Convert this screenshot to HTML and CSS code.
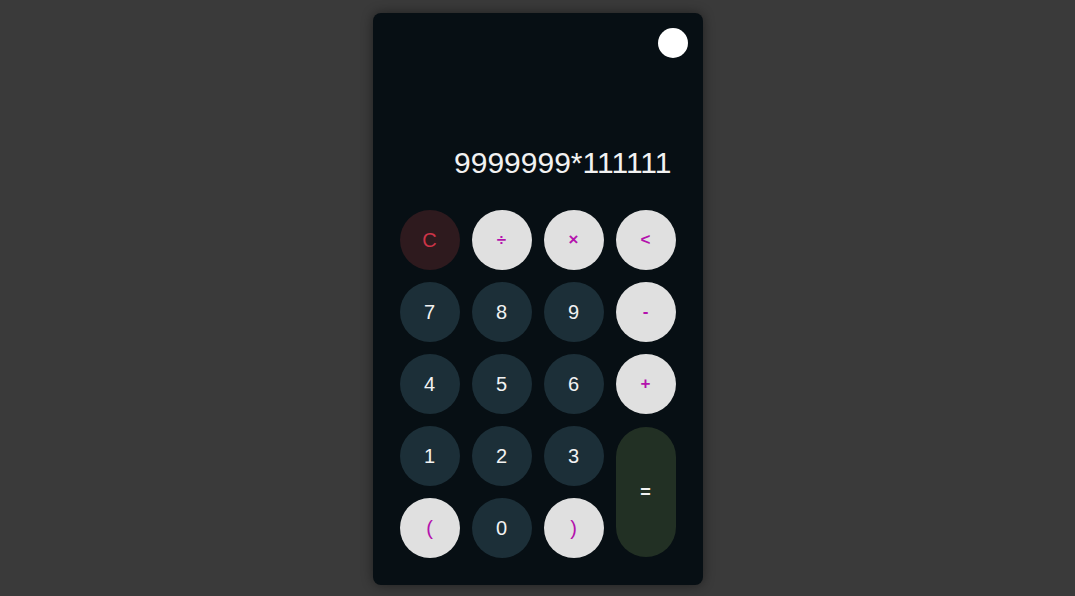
FILE: index.html
```html
<!DOCTYPE html>
<html lang="en">
<head>
<meta charset="utf-8">
<meta name="format-detection" content="telephone=no">
<title>Calculator</title>
<link rel="stylesheet" href="styles.css">
</head>
<body>
<div class="calc">
  <div class="top">
    <span class="toggle"></span>
  </div>
  <div class="display"><span class="expr">9999999*111111</span></div>
  <div class="keys">
    <button class="key clear">C</button>
    <button class="key op">÷</button>
    <button class="key op">×</button>
    <button class="key op">&lt;</button>
    <button class="key num">7</button>
    <button class="key num">8</button>
    <button class="key num">9</button>
    <button class="key op">-</button>
    <button class="key num">4</button>
    <button class="key num">5</button>
    <button class="key num">6</button>
    <button class="key op">+</button>
    <button class="key num">1</button>
    <button class="key num">2</button>
    <button class="key num">3</button>
    <button class="key equals">=</button>
    <button class="key op paren">(</button>
    <button class="key num">0</button>
    <button class="key op paren">)</button>
  </div>
</div>
</body>
</html>
```
FILE: styles.css
```css
html, body {
  margin: 0;
  padding: 0;
}
body {
  background: #3a3a3a;
  height: 596px;
  display: flex;
  justify-content: center;
  align-items: flex-start;
  padding-top: 13px;
  box-sizing: border-box;
  font-family: "Liberation Sans", Arial, sans-serif;
}
.calc {
  width: 330px;
  box-sizing: border-box;
  background: #070f14;
  border-radius: 8px;
  box-shadow: 0 0 12px rgba(0, 0, 0, 0.45);
  padding: 15px 15px 27px;
  display: flex;
  flex-direction: column;
}
.top {
  display: flex;
  justify-content: flex-end;
  height: 30px;
}
.toggle {
  width: 30px;
  height: 30px;
  border-radius: 50%;
  background: #ffffff;
}
.display {
  margin-top: 87px;
  padding-right: 16px;
  text-align: right;
  color: #f2f2f2;
  font-size: 30px;
  line-height: 36px;
}
.expr {
  text-decoration: none;
  color: inherit;
}
.keys {
  margin: 29px 12px 0;
  display: grid;
  grid-template-columns: repeat(4, 60px);
  grid-template-rows: repeat(5, 60px);
  gap: 12px;
}
.key {
  border: none;
  padding: 0;
  margin: 0;
  width: 60px;
  height: 60px;
  border-radius: 30px;
  font-family: "Liberation Sans", Arial, sans-serif;
  font-size: 20px;
  display: flex;
  align-items: center;
  justify-content: center;
}
.num {
  background: #1c2f38;
  color: #f2f2f2;
}
.clear {
  background: #2e1a1e;
  color: #cc3448;
}
.op {
  background: #e0e0e0;
  color: #b412ad;
  font-size: 17px;
  font-weight: bold;
}
.paren {
  font-size: 20px;
  font-weight: normal;
}
.equals {
  grid-column: 4;
  grid-row: 4 / span 2;
  height: 130px;
  align-self: center;
  background: #223024;
  color: #f2f2f2;
  font-size: 18px;
  font-weight: bold;
}
```
